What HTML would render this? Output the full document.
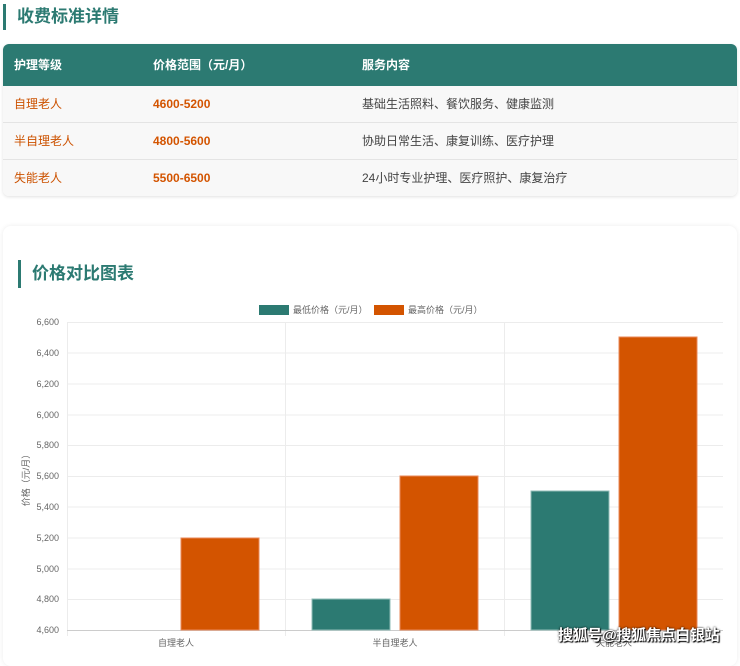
<!DOCTYPE html>
<html><head><meta charset="utf-8"><style>
body{margin:0;width:740px;height:651px;overflow:hidden;background:#fff;font-family:"Liberation Sans","Noto Sans CJK SC",sans-serif;}
.h1{position:absolute;left:3px;top:4px;height:26px;border-left:3px solid #2c7a72;padding-left:11px;font-size:17px;font-weight:bold;color:#2c7a72;line-height:26px;}
.tbl{position:absolute;left:3px;top:44px;width:734px;border-radius:6px;overflow:hidden;box-shadow:0 1px 3px rgba(0,0,0,.12);}
.row{position:relative;height:36px;background:#f8f8f8;border-top:1px solid #e4e4e4;font-size:12px;line-height:36px;}
.hd{height:42px;line-height:42px;background:#2c7a72;color:#fff;font-weight:bold;border:none;}
.row span{position:absolute;}
.c1{left:11px}.c2{left:150px}.c3{left:359px}
.o{color:#d35400;font-weight:bold}
.n{color:#cc5200}
.g{color:#444}
.card{position:absolute;left:3px;top:226px;width:734px;height:440px;border-radius:8px;background:#fff;box-shadow:0 0 5px rgba(0,0,0,.08);}
.h2{position:absolute;left:15px;top:34px;height:28px;border-left:3px solid #2c7a72;padding-left:11px;font-size:17px;font-weight:bold;color:#2c7a72;line-height:28px;}
svg{position:absolute;left:0;top:0}
.wm{position:absolute;left:558px;top:624px;font-size:15px;font-weight:bold;color:#fff;text-shadow:0 0 2px #000,1px 1px 1px #000;letter-spacing:-0.3px;}
</style></head><body>
<div class="h1">收费标准详情</div>
<div class="tbl">
<div class="row hd"><span class="c1">护理等级</span><span class="c2">价格范围（元/月）</span><span class="c3">服务内容</span></div>
<div class="row" style="border-top:none"><span class="c1 n">自理老人</span><span class="c2 o">4600-5200</span><span class="c3 g">基础生活照料、餐饮服务、健康监测</span></div>
<div class="row"><span class="c1 n">半自理老人</span><span class="c2 o">4800-5600</span><span class="c3 g">协助日常生活、康复训练、医疗护理</span></div>
<div class="row"><span class="c1 n">失能老人</span><span class="c2 o">5500-6500</span><span class="c3 g">24小时专业护理、医疗照护、康复治疗</span></div>
</div>
<div class="card"><div class="h2">价格对比图表</div></div>
<svg width="740" height="651" font-family="Liberation Sans,Noto Sans CJK SC,sans-serif">
<g stroke="#ececec" stroke-width="1">
<line x1="67" y1="322.5" x2="723" y2="322.5"/><line x1="67" y1="353" x2="723" y2="353"/><line x1="67" y1="384" x2="723" y2="384"/><line x1="67" y1="415" x2="723" y2="415"/><line x1="67" y1="445.5" x2="723" y2="445.5"/><line x1="67" y1="476.5" x2="723" y2="476.5"/><line x1="67" y1="507" x2="723" y2="507"/><line x1="67" y1="538" x2="723" y2="538"/><line x1="67" y1="569" x2="723" y2="569"/><line x1="67" y1="599.5" x2="723" y2="599.5"/>
<line x1="67.5" y1="322" x2="67.5" y2="636"/><line x1="285.5" y1="322" x2="285.5" y2="636"/><line x1="504.5" y1="322" x2="504.5" y2="636"/>
</g>
<line x1="67" y1="630.5" x2="723" y2="630.5" stroke="#ccc"/>
<g font-size="9" fill="#666" text-anchor="end">
<text x="59" y="325">6,600</text><text x="59" y="356">6,400</text><text x="59" y="387">6,200</text><text x="59" y="418">6,000</text><text x="59" y="448">5,800</text><text x="59" y="479">5,600</text><text x="59" y="510">5,400</text><text x="59" y="541">5,200</text><text x="59" y="572">5,000</text><text x="59" y="602">4,800</text><text x="59" y="633">4,600</text>
</g>
<text x="29" y="478" font-size="9" fill="#666" text-anchor="middle" transform="rotate(-90 29 478)">价格（元/月）</text>
<g stroke-width="1">
<rect x="181" y="538" width="78" height="92" fill="#d35400" stroke="#e8885a"/>
<rect x="312" y="599" width="78" height="31" fill="#2c7a72" stroke="#8fbcb7"/>
<rect x="400" y="476" width="78" height="154" fill="#d35400" stroke="#e8885a"/>
<rect x="531" y="491" width="78" height="139" fill="#2c7a72" stroke="#8fbcb7"/>
<rect x="619" y="337" width="78" height="293" fill="#d35400" stroke="#e8885a"/>
</g>
<g font-size="9" fill="#666" text-anchor="middle">
<text x="176" y="646">自理老人</text><text x="395" y="646">半自理老人</text><text x="614" y="646">失能老人</text>
</g>
<rect x="259" y="305" width="30" height="10" fill="#2c7a72"/>
<text x="293" y="313" font-size="9" fill="#666">最低价格（元/月）</text>
<rect x="374" y="305" width="30" height="10" fill="#d35400"/>
<text x="408" y="313" font-size="9" fill="#666">最高价格（元/月）</text>
</svg>
<div class="wm">搜狐号@搜狐焦点白银站</div>
</body></html>
